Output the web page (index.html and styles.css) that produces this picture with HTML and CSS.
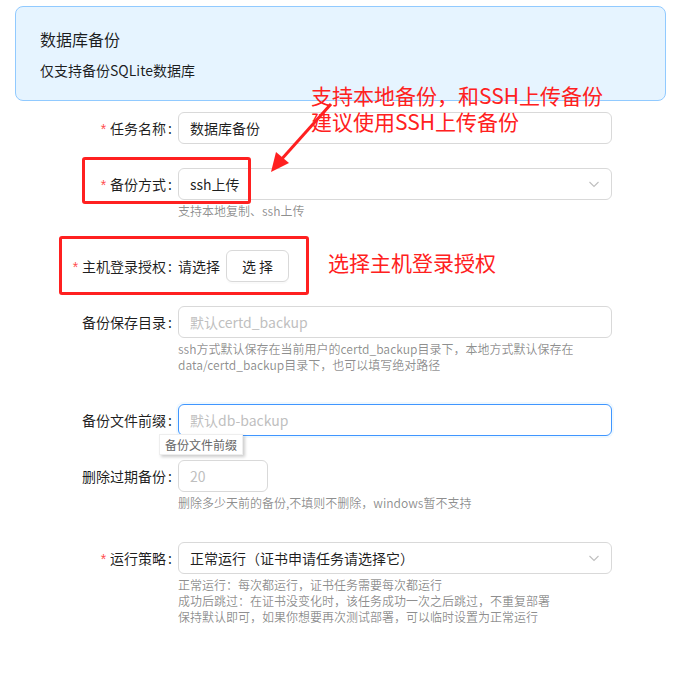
FILE: index.html
```html
<!DOCTYPE html>
<html lang="zh-CN">
<head>
    <meta charset="UTF-8">
    <meta name="viewport" content="width=device-width, initial-scale=1.0">
    <title>数据库备份</title>
    <link rel="stylesheet" href="styles.css">
</head>
<body>
<div class="page">

    <div class="alert">
        <div class="alert-title">数据库备份</div>
        <div class="alert-desc">仅支持备份SQLite数据库</div>
    </div>

    <form class="form">
        <div class="row">
            <label class="label required">任务名称<span class="colon">:</span></label>
            <div class="control">
                <div class="input">数据库备份</div>
            </div>
        </div>

        <div class="row has-help">
            <label class="label required">备份方式<span class="colon">:</span></label>
            <div class="control">
                <div class="input select">
                    <span>ssh上传</span>
                    <svg class="chevron" width="12" height="12" viewBox="0 0 12 12"><path d="M1.5 4 L6 8.5 L10.5 4" fill="none" stroke="#bfbfbf" stroke-width="1.1"/></svg>
                </div>
                <div class="help">支持本地复制、ssh上传</div>
            </div>
        </div>

        <div class="row">
            <label class="label required">主机登录授权<span class="colon">:</span></label>
            <div class="control inline">
                <span class="plain">请选择</span>
                <button type="button" class="btn">选 择</button>
            </div>
        </div>

        <div class="row has-help">
            <label class="label">备份保存目录<span class="colon">:</span></label>
            <div class="control">
                <div class="input placeholder">默认certd_backup</div>
                <div class="help">ssh方式默认保存在当前用户的certd_backup目录下，本地方式默认保存在<br>data/certd_backup目录下，也可以填写绝对路径</div>
            </div>
        </div>

        <div class="row">
            <label class="label">备份文件前缀<span class="colon">:</span></label>
            <div class="control">
                <div class="input placeholder focused">默认db-backup</div>
                <div class="tooltip">备份文件前缀</div>
            </div>
        </div>

        <div class="row has-help">
            <label class="label">删除过期备份<span class="colon">:</span></label>
            <div class="control">
                <div class="input number placeholder">20</div>
                <div class="help">删除多少天前的备份,不填则不删除，windows暂不支持</div>
            </div>
        </div>

        <div class="row has-help">
            <label class="label required">运行策略<span class="colon">:</span></label>
            <div class="control">
                <div class="input select">
                    <span>正常运行（证书申请任务请选择它）</span>
                    <svg class="chevron" width="12" height="12" viewBox="0 0 12 12"><path d="M1.5 4 L6 8.5 L10.5 4" fill="none" stroke="#bfbfbf" stroke-width="1.1"/></svg>
                </div>
                <div class="help">正常运行：每次都运行，证书任务需要每次都运行<br>成功后跳过：在证书没变化时，该任务成功一次之后跳过，不重复部署<br>保持默认即可，如果你想要再次测试部署，可以临时设置为正常运行</div>
            </div>
        </div>
    </form>

    <!-- screenshot annotations -->
    <div class="note note-ssh">支持本地备份，和SSH上传备份<br>建议使用SSH上传备份</div>
    <div class="mark mark-type"></div>
    <div class="mark mark-host"></div>
    <div class="note note-host">选择主机登录授权</div>
    <svg class="arrow" width="681" height="300" viewBox="0 0 681 300">
        <line x1="331" y1="104" x2="280" y2="161" stroke="#ff2020" stroke-width="3"/>
        <polygon points="271,172 276,152 289,163" fill="#ff2020"/>
    </svg>

</div>
</body>
</html>
```

FILE: styles.css
```css
* {
    box-sizing: border-box;
}

body {
    margin: 0;
    font-family: "Noto Sans CJK SC", "Noto Sans", sans-serif;
    font-size: 14px;
    color: rgba(0, 0, 0, 0.88);
    background: #fff;
}

.page {
    position: relative;
    width: 681px;
    height: 681px;
    padding: 6px 15px 0;
}

.alert {
    background-color: #e6f4ff;
    border: 1px solid #91caff;
    border-radius: 8px;
    padding: 20px 24px 19px;
}

.alert-title {
    font-size: 16px;
    line-height: 24px;
}

.alert-desc {
    margin-top: 8px;
    font-size: 14px;
    line-height: 22px;
}

.form {
    margin-top: 11px;
}

.row {
    display: flex;
    align-items: flex-start;
    margin-bottom: 24px;
}

.row.has-help {
    margin-bottom: 31px;
}

.label {
    width: 163px;
    flex-shrink: 0;
    height: 32px;
    line-height: 32px;
    text-align: right;
    white-space: nowrap;
}

.label.required::before {
    content: "*";
    color: #ff4d4f;
    margin-right: 4px;
    font-family: SimSun, "Liberation Sans", sans-serif;
}

.colon {
    margin-left: 2px;
    margin-right: 6px;
}

.control {
    position: relative;
    width: 434px;
}

.control.inline {
    display: flex;
    align-items: center;
    gap: 6px;
    height: 32px;
}

.input {
    height: 32px;
    line-height: 30px;
    padding: 0 11px;
    border: 1px solid #d9d9d9;
    border-radius: 6px;
    background: #fff;
}

.input.placeholder {
    color: #bfbfbf;
}

.input.focused {
    border-color: #4096ff;
    box-shadow: 0 0 0 2px rgba(5, 145, 255, 0.06);
}

.input.number {
    width: 90px;
}

.select {
    display: flex;
    justify-content: space-between;
    align-items: center;
}

.chevron {
    margin-right: 0;
}

.btn {
    height: 32px;
    width: 63px;
    padding: 0;
    font-family: inherit;
    font-size: 14px;
    color: rgba(0, 0, 0, 0.88);
    background: #fff;
    border: 1px solid #d9d9d9;
    border-radius: 6px;
    box-shadow: 0 2px 0 rgba(0, 0, 0, 0.02);
}

.help {
    margin-top: 3px;
    font-size: 12px;
    line-height: 16px;
    color: rgba(0, 0, 0, 0.45);
    white-space: nowrap;
}

.tooltip {
    position: absolute;
    left: -19px;
    top: 30px;
    padding: 0 5px;
    font-size: 12px;
    line-height: 19px;
    color: #666;
    background: #fff;
    border: 1px solid #eee;
    box-shadow: 2px 2px 3px rgba(0, 0, 0, 0.2);
}

.note {
    position: absolute;
    font-size: 21px;
    line-height: 26px;
    color: #ff2020;
    white-space: nowrap;
}

.note-ssh {
    left: 311px;
    top: 82px;
}

.note-host {
    left: 328px;
    top: 249px;
}

.mark {
    position: absolute;
    border: 3px solid #ff2020;
    border-radius: 3px;
}

.mark-type {
    left: 82px;
    top: 157px;
    width: 169px;
    height: 47px;
}

.mark-host {
    left: 59px;
    top: 236px;
    width: 250px;
    height: 59px;
}

.arrow {
    position: absolute;
    left: 0;
    top: 0;
}
```
